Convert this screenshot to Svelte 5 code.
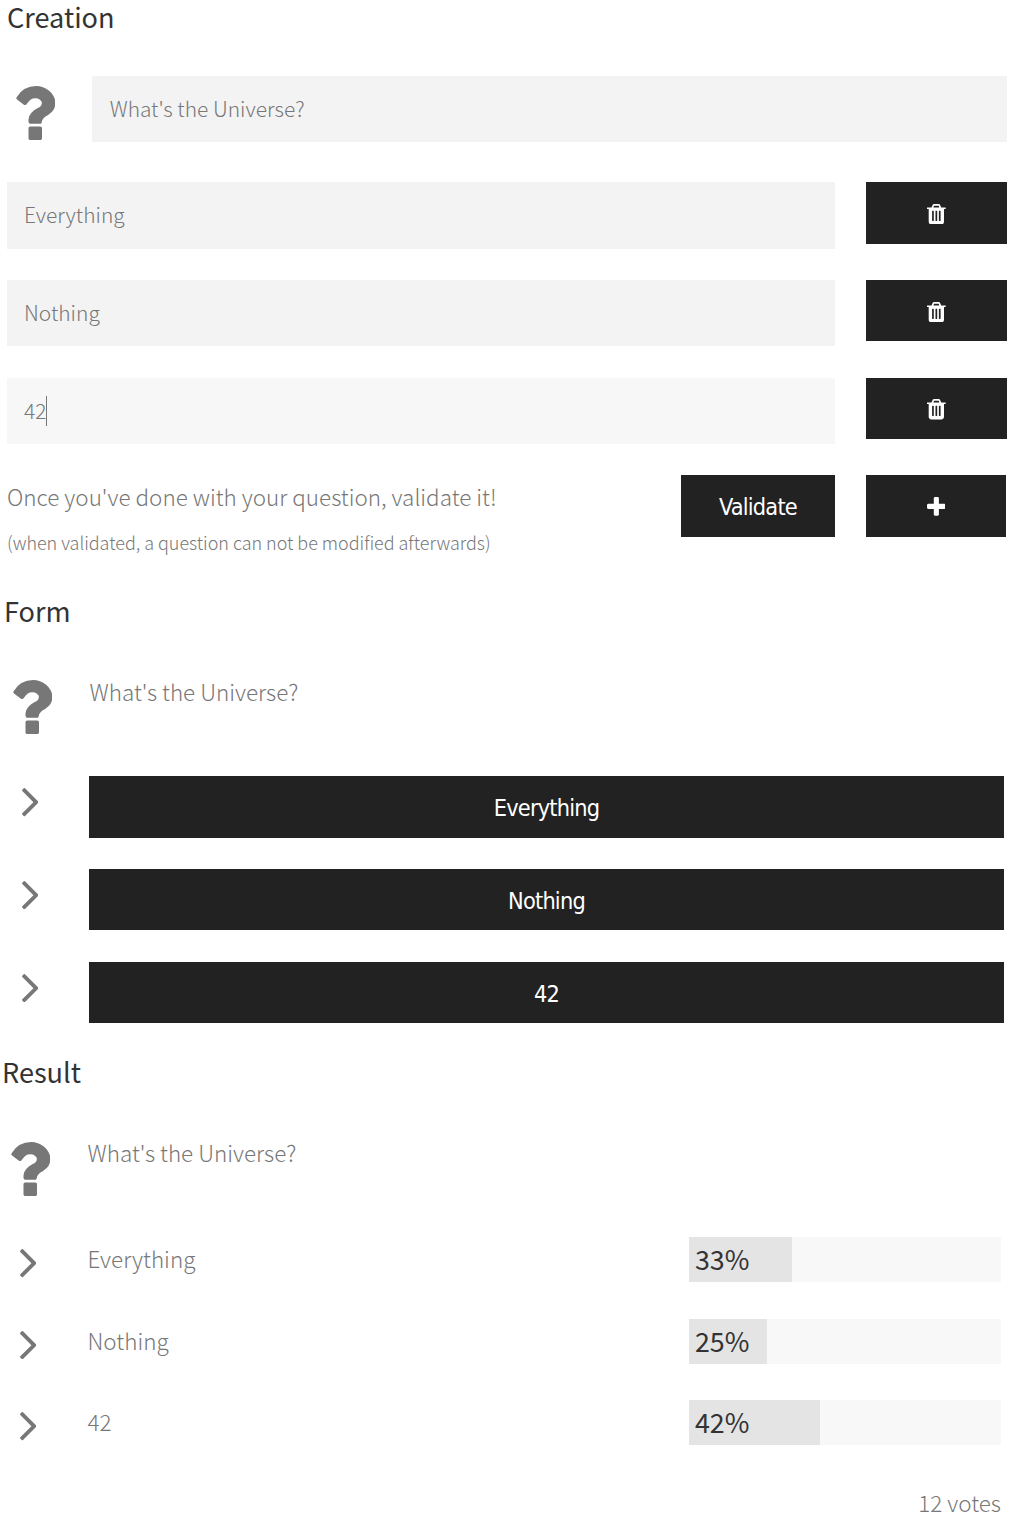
<script>
  const question = "What's the Universe?";
  const answers = [
    { label: 'Everything', percent: 33 },
    { label: 'Nothing', percent: 25 },
    { label: '42', percent: 42 }
  ];
  const focused = 2;
</script>

{#snippet questionIcon()}
  <svg class="question-icon" viewBox="448 256 960 1280" aria-hidden="true">
    <path d="M1088 1256v240q0 16-12 28t-28 12h-240q-16 0-28-12t-12-28v-240q0-16 12-28t28-12h240q16 0 28 12t12 28zm316-600q0 54-15.5 101t-35 76.5-55 59.5-57.5 43.5-61 35.5q-41 23-68.5 65t-27.5 67q0 17-12 32.5t-28 15.5h-240q-15 0-25.5-18.5t-10.5-37.5v-45q0-83 65-156.5t143-108.5q59-27 84-56t25-76q0-42-46.5-74t-107.5-32q-65 0-108 29-35 25-107 115-13 16-31 16-12 0-25-8l-164-125q-13-10-15.5-25t5.5-28q160-266 464-266 80 0 161 31t146 83 106 127.5 41 158.5z" />
  </svg>
{/snippet}

{#snippet angleIcon()}
  <svg class="angle-icon" viewBox="589 461 582 998" aria-hidden="true">
    <path d="M1171 960q0 13-10 23l-466 466q-10 10-23 10t-23-10l-50-50q-10-10-10-23t10-23l393-393-393-393q-10-10-10-23t10-23l50-50q10-10 23-10t23 10l466 466q10 10 10 23z" />
  </svg>
{/snippet}

<main>
  <section class="creation">
    <h2>Creation</h2>
    <div class="question-row">
      {@render questionIcon()}
      <div class="field"><input value={question} aria-label="Question" /></div>
    </div>
    <div class="options">
      {#each answers as answer, i}
        <div class="option-row">
          <div class="field" class:focused={i === focused}>
            <input value={answer.label} aria-label="Answer" />
            {#if i === focused}<span class="caret"></span>{/if}
          </div>
          <button aria-label="Delete">
            <svg class="trash-icon" viewBox="192 128 1408 1536" aria-hidden="true">
              <path d="M704 1376v-704q0-14-9-23t-23-9h-64q-14 0-23 9t-9 23v704q0 14 9 23t23 9h64q14 0 23-9t9-23zm256 0v-704q0-14-9-23t-23-9h-64q-14 0-23 9t-9 23v704q0 14 9 23t23 9h64q14 0 23-9t9-23zm256 0v-704q0-14-9-23t-23-9h-64q-14 0-23 9t-9 23v704q0 14 9 23t23 9h64q14 0 23-9t9-23zm-544-992h448l-48-117q-7-9-17-11h-317q-10 2-17 11zm928 32v64q0 14-9 23t-23 9h-96v948q0 83-47 143.5t-113 60.5h-832q-66 0-113-58.5t-47-141.5v-952h-96q-14 0-23-9t-9-23v-64q0-14 9-23t23-9h309l70-167q15-37 54-63t79-26h320q40 0 79 26t54 63l70 167h309q14 0 23 9t9 23z" />
            </svg>
          </button>
        </div>
      {/each}
    </div>
    <div class="footer-row">
      <div class="hint">
        <p>Once you've done with your question, validate it!</p>
        <small>(when validated, a question can not be modified afterwards)</small>
      </div>
      <button class="labelled">Validate</button>
      <button class="add" aria-label="Add">
        <svg class="plus-icon" viewBox="192 128 1408 1408" aria-hidden="true">
          <path d="M1600 736v192q0 40-28 68t-68 28h-416v416q0 40-28 68t-68 28h-192q-40 0-68-28t-28-68v-416h-416q-40 0-68-28t-28-68v-192q0-40 28-68t68-28h416v-416q0-40 28-68t68-28h192q40 0 68 28t28 68v416h416q40 0 68 28t28 68z" />
        </svg>
      </button>
    </div>
  </section>

  <section class="form">
    <h2>Form</h2>
    <div class="question-row">
      {@render questionIcon()}
      <p>{question}</p>
    </div>
    <div class="choices">
      {#each answers as answer}
        <div class="choice-row">
          {@render angleIcon()}
          <button class="labelled">{answer.label}</button>
        </div>
      {/each}
    </div>
  </section>

  <section class="result">
    <h2>Result</h2>
    <div class="question-row">
      {@render questionIcon()}
      <p>{question}</p>
    </div>
    <div class="scores">
      {#each answers as answer}
        <div class="score-row">
          {@render angleIcon()}
          <p>{answer.label}</p>
          <div class="bar">
            <div class="fill" style="width: {answer.percent}%">{answer.percent}%</div>
          </div>
        </div>
      {/each}
    </div>
    <p class="votes">12 votes</p>
  </section>
</main>

<style>
  :global(body) {
    margin: 0;
    background: #fff;
  }

  main {
    width: 1012px;
    height: 1540px;
    color: #777;
    font-family: 'Noto Sans CJK SC', sans-serif;
    font-size: 22.45px;
    font-weight: 300;
    line-height: 32px;
  }

  section {
    box-sizing: border-box;
    width: 1000px;
  }

  .creation {
    height: 594px;
    margin-left: 7px;
  }

  .form {
    height: 461px;
    margin-left: 4px;
  }

  .result {
    margin-left: 2px;
    width: 999px;
  }

  h2 {
    margin: 0 0 43px;
    color: #333;
    font-size: 27.1px;
    font-weight: 400;
    line-height: 33px;
  }

  p {
    margin: 0;
  }

  svg {
    display: block;
    flex: none;
    fill: currentColor;
  }

  .question-row {
    display: grid;
    grid-template-columns: 85px 1fr;
    height: 66px;
  }

  .question-row p {
    padding: 5px 0 0 0.5px;
  }

  .question-icon {
    width: 40.5px;
    height: 54px;
    margin: 10px 0 0 7.7px;
  }

  .result .question-icon {
    margin-top: 11px;
  }

  .field {
    position: relative;
    display: flex;
    height: 66px;
    background: #f3f3f3;
  }

  .field.focused {
    background: #f7f7f7;
  }

  input {
    box-sizing: border-box;
    width: 100%;
    padding: 0 17px 2px;
    border: 0;
    outline: 0;
    background: transparent;
    color: #777;
    font: inherit;
    font-size: 20.95px;
  }

  .question-row input {
    padding-left: 17.7px;
  }

  .caret {
    position: absolute;
    top: 18px;
    left: 39px;
    width: 1px;
    height: 30px;
    background: #777;
  }

  button {
    box-sizing: border-box;
    display: flex;
    align-items: center;
    justify-content: center;
    height: 61.5px;
    padding: 0;
    border: 0;
    border-radius: 0;
    background: #222;
    color: #fff;
    font-family: 'DejaVu Sans Condensed', 'DejaVu Sans', sans-serif;
    font-stretch: condensed;
    font-size: 23.3px;
    font-weight: 400;
    letter-spacing: -0.8px;
  }

  .labelled {
    padding-top: 1.5px;
  }

  .options {
    display: grid;
    gap: 31.5px;
    margin-top: 40.3px;
  }

  .option-row {
    display: grid;
    grid-template-columns: 828px 141px;
    column-gap: 31px;
  }

  .option-row .field {
    height: 66.3px;
  }

  .option-row button,
  .footer-row button {
    height: 61.3px;
  }

  .trash-icon {
    width: 18.7px;
    height: 20.4px;
    margin-top: 2px;
  }

  .plus-icon {
    width: 18.7px;
    height: 18.7px;
    margin-top: 1px;
  }

  .footer-row {
    display: grid;
    grid-template-columns: 674px 154px 171px;
    margin-top: 31.1px;
  }

  .add {
    margin-left: 31px;
    width: 140px;
  }

  .hint {
    padding-top: 5px;
    white-space: nowrap;
  }

  .hint small {
    display: block;
    margin-top: 13.5px;
    font-size: 17.95px;
  }

  .choices {
    display: grid;
    gap: 31.3px;
    margin-top: 40px;
  }

  .choice-row {
    display: grid;
    grid-template-columns: 85px 1fr;
  }

  .angle-icon {
    width: 16.5px;
    height: 28.3px;
    margin: 12.4px 0 0 17.6px;
  }

  .scores {
    display: grid;
    gap: 36.5px;
    margin-top: 40px;
  }

  .score-row {
    display: grid;
    grid-template-columns: 85px 602px 312px;
    height: 45px;
  }

  .score-row p {
    padding: 5px 0 0 0.5px;
  }

  .bar {
    background: #f8f8f8;
  }

  .fill {
    height: 45px;
    background: #e4e4e4;
    color: #333;
    font-size: 26.8px;
    font-weight: 400;
    line-height: 43px;
    text-indent: 6px;
  }

  .votes {
    margin-top: 41px;
    text-align: right;
  }
</style>
